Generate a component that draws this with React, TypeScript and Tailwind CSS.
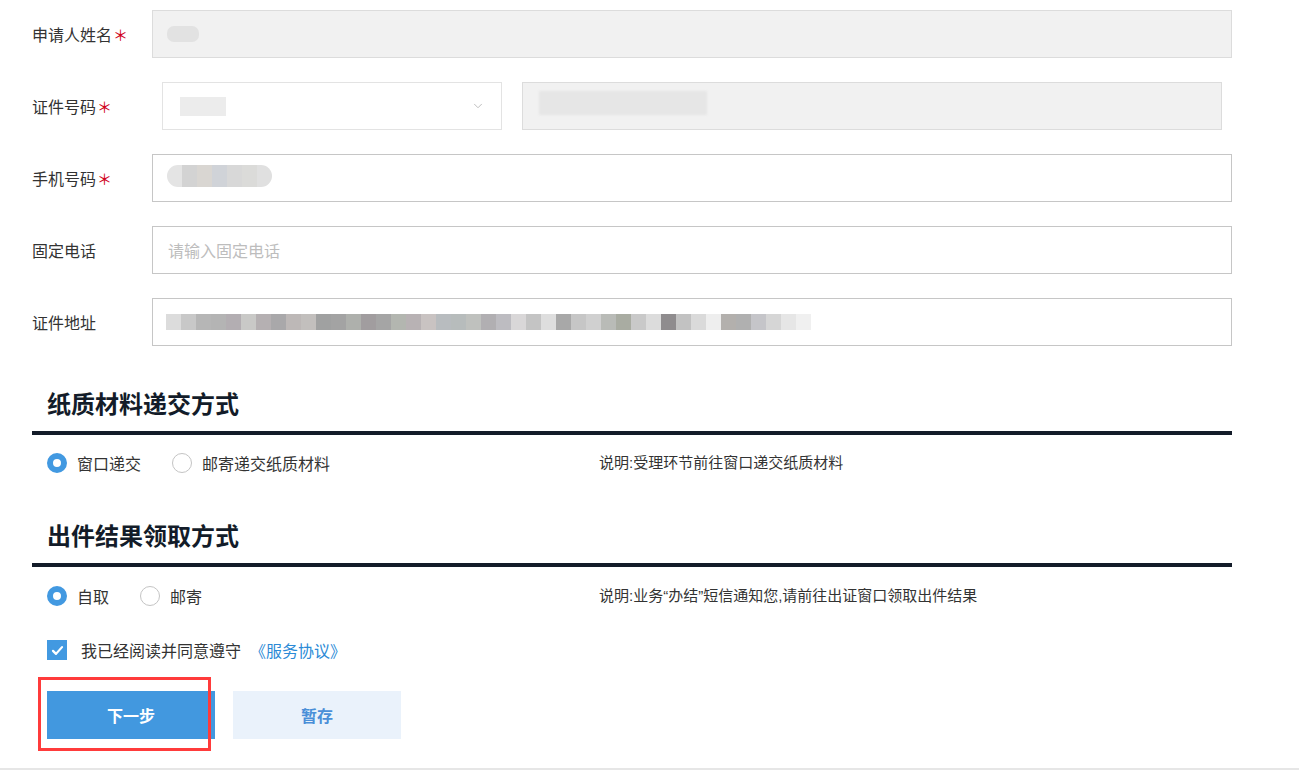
import { ChevronDown } from 'lucide-react';

const font = { fontFamily: '"Noto Sans CJK SC", "Noto Sans", sans-serif' };
const noteFont = { fontFamily: '"Liberation Sans", "Noto Sans CJK SC", sans-serif' };

// 模糊处理过的地址文字块
const addressBlocks = [
  'bg-[#dcdcdc]', 'bg-[#c8c8c8]', 'bg-[#b6b6b6]', 'bg-[#b4b4b4]', 'bg-[#b3aeb2]', 'bg-[#c9c9c7]',
  'bg-[#b5b0b2]', 'bg-[#a9a8aa]', 'bg-[#bdb8b7]', 'bg-[#c2bfbd]', 'bg-[#a0a1a1]', 'bg-[#a3a3a3]',
  'bg-[#aeb0ac]', 'bg-[#a19d9f]', 'bg-[#a5a5a5]', 'bg-[#b3b6b0]', 'bg-[#b8b2b4]', 'bg-[#c9c3c2]',
  'bg-[#b8bcbf]', 'bg-[#b7bcbc]', 'bg-[#bfc1be]', 'bg-[#b1afb2]', 'bg-[#bdbcc1]', 'bg-[#d9d7d8]',
  'bg-[#c4c4c4]', 'bg-[#dedede]', 'bg-[#a8a8a8]', 'bg-[#c6c6c6]', 'bg-[#d0d0d0]', 'bg-[#b9bbb7]',
  'bg-[#a9aca2]', 'bg-[#c9c9c9]', 'bg-[#dcdcdc]', 'bg-[#8f8c8e]', 'bg-[#c2c2c2]', 'bg-[#dadada]',
  'bg-[#eeeeee]', 'bg-[#b3b0ad]', 'bg-[#b0b0b0]', 'bg-[#c5c5c9]', 'bg-[#d6d6d6]', 'bg-[#e6e6e6]',
  'bg-[#f0f0f0]',
];

const phoneBlocks = ['bg-[#e4e4e4]', 'bg-[#d3d3d3]', 'bg-[#d9d6d2]', 'bg-[#d0d3d8]', 'bg-[#d8d8d8]', 'bg-[#dbdbd9]', 'bg-[#e0e0e0]'];

function Label({ text, required }: { text: string; required?: boolean }) {
  return (
    <div className="w-[120px] shrink-0 flex items-center text-[16px] text-[#333]">
      <span>{text}</span>
      {required && <span className="ml-[1px] text-[#d0021b] text-[15px] leading-none">＊</span>}
    </div>
  );
}

function Radio({ checked, label }: { checked?: boolean; label: string }) {
  return (
    <div className="flex items-center mr-[31px]">
      {checked ? (
        <span className="w-[20px] h-[20px] rounded-full border-[6px] border-[#4299e1] bg-white" />
      ) : (
        <span className="w-[20px] h-[20px] rounded-full border border-[#c4c4c4] bg-white" />
      )}
      <span className="ml-[10px] text-[16px] text-[#333]">{label}</span>
    </div>
  );
}

function Section({ title }: { title: string }) {
  return (
    <div className="h-[59px] flex items-center pl-[15px] pb-[2px] border-b-4 border-[#131c29]">
      <h2 className="text-[24px] font-bold text-[#131c29]">{title}</h2>
    </div>
  );
}

export default function App() {
  return (
    <div className="relative w-[1299px] h-[770px] bg-white overflow-hidden" style={font}>
      <div className="pl-[32px] pr-[67px] pt-[10px]">
        <div className="flex flex-col gap-[24px]">
          <div className="flex items-center h-[48px]">
            <Label text="申请人姓名" required />
            <div className="flex-1 h-full bg-[#f1f1f1] border border-[#dcdcdc] flex items-center pl-[14px]">
              <div className="w-[32px] h-[16px] bg-[#e2e2e2] rounded-[7px] blur-[0.5px]" />
            </div>
          </div>

          <div className="flex items-center h-[48px]">
            <Label text="证件号码" required />
            <div className="ml-[10px] w-[340px] h-full border border-[#e3e3e3] flex items-center justify-between pl-[17px] pr-[16px]">
              <div className="w-[46px] h-[19px] bg-[#ececec] blur-[0.5px]" />
              <ChevronDown className="w-[14px] h-[14px] text-[#b5b5b5]" strokeWidth={1.5} />
            </div>
            <div className="ml-[20px] mr-[10px] flex-1 h-full bg-[#f1f1f1] border border-[#dcdcdc] flex items-center pl-[16px]">
              <div className="w-[168px] h-[24px] bg-[#e6e6e6] blur-[1px] -mt-[6px]" />
            </div>
          </div>

          <div className="flex items-center h-[48px]">
            <Label text="手机号码" required />
            <div className="flex-1 h-full border border-[#c6c6c6] flex items-center pl-[14px]">
              <div className="flex h-[22px] rounded-full overflow-hidden blur-[0.5px] -mt-[4px]">
                {phoneBlocks.map((c, i) => (
                  <div key={i} className={`w-[15px] h-full ${c}`} />
                ))}
              </div>
            </div>
          </div>

          <div className="flex items-center h-[48px]">
            <Label text="固定电话" />
            <input
              className="flex-1 h-full border border-[#c6c6c6] pl-[15px] text-[16px] outline-none placeholder:text-[#bdbdbd]"
              placeholder="请输入固定电话"
              style={font}
            />
          </div>

          <div className="flex items-center h-[48px]">
            <Label text="证件地址" />
            <div className="flex-1 h-full border border-[#c6c6c6] flex items-center pl-[13px]">
              <div className="flex h-[16px]">
                {addressBlocks.map((c, i) => (
                  <div key={i} className={`w-[15px] h-full ${c}`} />
                ))}
              </div>
            </div>
          </div>
        </div>

        <div className="mt-[30px]">
          <Section title="纸质材料递交方式" />
          <div className="h-[56px] flex items-center pl-[15px]">
            <div className="w-[552px] flex items-center">
              <Radio checked label="窗口递交" />
              <Radio label="邮寄递交纸质材料" />
            </div>
            <span className="text-[15px] text-[#333]" style={noteFont}>说明:受理环节前往窗口递交纸质材料</span>
          </div>
        </div>

        <div className="mt-[17px]">
          <Section title="出件结果领取方式" />
          <div className="h-[58px] flex items-center pl-[15px]">
            <div className="w-[552px] flex items-center">
              <Radio checked label="自取" />
              <Radio label="邮寄" />
            </div>
            <span className="text-[15px] text-[#333]" style={noteFont}>说明:业务“办结”短信通知您,请前往出证窗口领取出件结果</span>
          </div>
        </div>

        <div className="h-[50px] flex items-center pl-[15px]">
          <span className="w-[20px] h-[20px] bg-[#4299e1] flex items-center justify-center">
            <svg viewBox="0 0 20 20" className="w-[15px] h-[15px]" fill="none">
              <path d="M4 10.5l4 4 8-9" stroke="white" strokeWidth="3" strokeLinecap="round" strokeLinejoin="round" />
            </svg>
          </span>
          <span className="ml-[14px] text-[16px] text-[#333]">我已经阅读并同意遵守</span>
          <a href="#" className="ml-[9px] text-[16px] text-[#2b8ad6]">《服务协议》</a>
        </div>

        <div className="mt-[16px] pl-[15px] flex gap-[18px]">
          <button className="w-[168px] h-[48px] bg-[#4298df] text-white text-[16px] font-bold" style={font}>
            下一步
          </button>
          <button className="w-[168px] h-[48px] bg-[#eaf2fb] text-[#4a8fd8] text-[16px] font-bold" style={font}>
            暂存
          </button>
        </div>
      </div>

      <div className="absolute left-0 right-0 top-[768px] h-[2px] bg-[#e6e6e6]" />
      <div className="absolute left-[38px] top-[677px] w-[173px] h-[74px] border-[3px] border-[#ff3b3b] pointer-events-none" />
    </div>
  );
}
